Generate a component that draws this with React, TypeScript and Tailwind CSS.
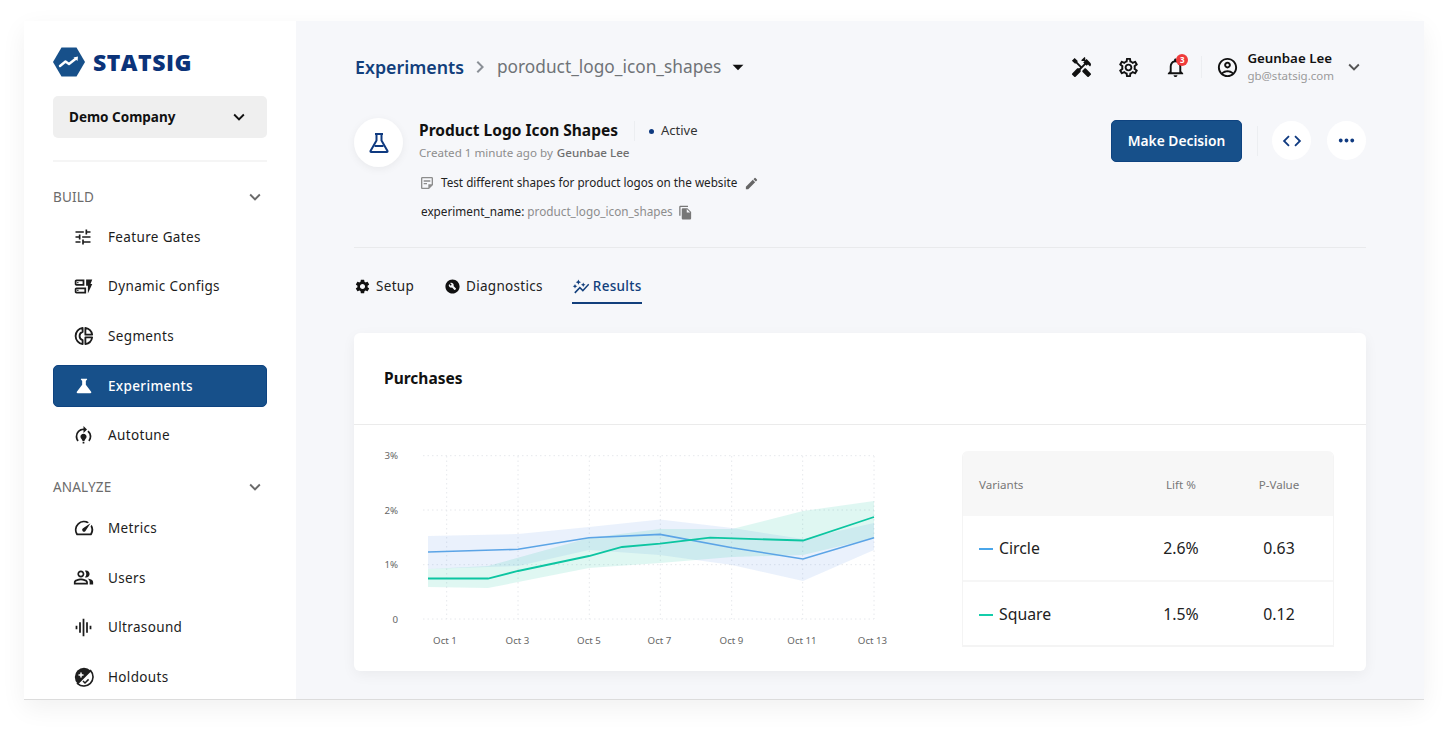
import type { ReactNode } from 'react';
import {
  MdAutoGraph,
  MdBuildCircle,
  MdCode,
  MdEdit,
  MdExpandMore,
  MdFileCopy,
  MdGraphicEq,
  MdHandyman,
  MdKeyboardArrowRight,
  MdMoreHoriz,
  MdNotificationsNone,
  MdOutlineAccountCircle,
  MdOutlineDynamicForm,
  MdOutlineModelTraining,
  MdOutlinePeopleAlt,
  MdOutlineSettings,
  MdOutlineSpeed,
  MdOutlineStickyNote2,
  MdScience,
  MdSettings,
  MdTune,
  MdArrowDropDown,
} from 'react-icons/md';

function HoldoutsIcon() {
  return (
    <svg width="22" height="22" viewBox="0 0 22 22">
      <circle cx="11" cy="11" r="9.2" fill="#1f1f1f" />
      <path d="M17.6 4.6 L4.6 17.6 A9.2 9.2 0 0 0 17.6 4.6Z" fill="#fff" stroke="#1f1f1f" strokeWidth="1.6" />
      <path d="M10 15l2 2 3.6-3.6" fill="none" stroke="#1f1f1f" strokeWidth="1.5" />
      <path d="M5.5 9h5M8 6.5v5" stroke="#fff" strokeWidth="1.5" />
    </svg>
  );
}

function SegmentsIcon() {
  return (
    <svg width="22" height="22" viewBox="0 0 24 24" fill="none" stroke="#1c1c1c" strokeWidth="2" strokeLinejoin="round">
      <path d="M10.5 3.1A9 9 0 0 0 10.5 20.9V16.5A4.7 4.7 0 0 1 10.5 7.5Z" />
      <path d="M13.5 3.1A9 9 0 0 1 20.9 10.5H13.5Z" />
      <path d="M13.5 13.5H20.9A9 9 0 0 1 13.5 20.9Z" />
    </svg>
  );
}

function Logo() {
  return (
    <div className="flex items-center gap-[8px] h-[30px]">
      <svg width="32" height="30" viewBox="0 0 32 30">
        <polygon points="0,15 8.5,0.5 23.5,0.5 32,15 23.5,29.5 8.5,29.5" fill="#17508a" />
        <path d="M7 19 L12.5 14.5 L16 17 L23 11.5" fill="none" stroke="#fff" strokeWidth="2.4" strokeLinecap="round" strokeLinejoin="round" />
        <path d="M20.5 10.5 L25 9.5 L24.5 14Z" fill="#fff" />
      </svg>
      <span className="font-['Open_Sans',sans-serif] font-extrabold text-[23px] leading-none text-[#0b3379] tracking-[0.5px]">STATSIG</span>
    </div>
  );
}

function NavItem({ icon, label, active }: { icon: ReactNode; label: string; active?: boolean }) {
  return (
    <div
      className={
        active
          ? 'flex items-center h-[42px] mb-[7.6px] rounded-[5px] bg-[#17508a] border border-[#0e4380] text-white font-medium'
          : 'flex items-center h-[42px] mb-[7.6px] border border-transparent text-[#1c1c1c]'
      }
    >
      <span className="w-[54px] pl-[19px] flex items-center shrink-0">{icon}</span>
      <span className="text-[13.5px] tracking-[0.35px]">{label}</span>
    </div>
  );
}

function SectionLabel({ label }: { label: string }) {
  return (
    <div className="flex items-center justify-between h-[20px] text-[#6b6b6b]">
      <span className="text-[13.5px] tracking-[0.2px]">{label}</span>
      <MdExpandMore size={22} className="mr-[1px]" />
    </div>
  );
}

function Sidebar() {
  return (
    <aside className="w-[272px] shrink-0 bg-white px-[29px] pt-[26px]">
      <Logo />
      <div className="mt-[19px] h-[42px] rounded-[5px] bg-[#efefef] flex items-center justify-between pl-[16px] pr-[17px]">
        <span className="text-[13.5px] font-bold text-[#111]">Demo Company</span>
        <MdExpandMore size={22} className="text-[#111]" />
      </div>
      <div className="mt-[22px] h-[2px] bg-[#f5f5f5]" />
      <div className="mt-[25px]">
        <SectionLabel label="BUILD" />
      </div>
      <div className="mt-[9px]">
        <NavItem icon={<MdTune size={20} />} label="Feature Gates" />
        <NavItem icon={<MdOutlineDynamicForm size={21} />} label="Dynamic Configs" />
        <NavItem icon={<SegmentsIcon />} label="Segments" />
        <NavItem active icon={<MdScience size={22} />} label="Experiments" />
        <NavItem icon={<MdOutlineModelTraining size={21} />} label="Autotune" />
      </div>
      <div className="mt-[21px]">
        <SectionLabel label="ANALYZE" />
      </div>
      <div className="mt-[10px]">
        <NavItem icon={<MdOutlineSpeed size={22} />} label="Metrics" />
        <NavItem icon={<MdOutlinePeopleAlt size={21} />} label="Users" />
        <NavItem icon={<MdGraphicEq size={21} />} label="Ultrasound" />
        <NavItem icon={<HoldoutsIcon />} label="Holdouts" />
      </div>
    </aside>
  );
}

function TopBar() {
  return (
    <div className="flex items-center justify-between h-[36px]">
      <div className="flex items-center ml-[1px]">
        <span className="text-[17.8px] font-semibold text-[#123f7c]">Experiments</span>
        <MdKeyboardArrowRight size={24} className="text-[#8a8f96] ml-[4px] mr-[5px]" />
        <span className="text-[17.3px] text-[#6f7377]">poroduct_logo_icon_shapes</span>
        <MdArrowDropDown size={26} className="text-[#111] ml-[4px]" />
      </div>
      <div className="flex items-center text-[#111] mr-[1px]">
        <MdHandyman size={23} />
        <MdOutlineSettings size={23} className="ml-[24px]" />
        <div className="relative ml-[24px]">
          <MdNotificationsNone size={23} />
          <span className="absolute -top-[2px] right-[-1px] w-[12px] h-[12px] rounded-full bg-[#ef3b3b] text-white text-[8px] font-bold leading-[12px] text-center">
            3
          </span>
        </div>
        <div className="w-px h-[22px] bg-[#eceef1] ml-[14px]" />
        <MdOutlineAccountCircle size={23} className="ml-[14px]" />
        <div className="ml-[8px] leading-none">
          <div className="text-[13.3px] font-semibold text-[#111] leading-[17px]">Geunbae Lee</div>
          <div className="text-[11.5px] text-[#9a9a9a] leading-[17px]">gb@statsig.com</div>
        </div>
        <MdExpandMore size={22} className="ml-[9px] text-[#555]" />
      </div>
    </div>
  );
}

function ExperimentHeader() {
  return (
    <div className="flex items-start justify-between mt-[33px] h-[130px] border-b border-[#e9eaec]">
      <div className="flex items-start">
        <div className="w-[49px] h-[49px] rounded-full bg-white shadow-[0_2px_8px_rgba(0,0,0,0.06)] flex items-center justify-center">
          <svg width="24" height="24" viewBox="0 0 24 24" fill="none" stroke="#0f3a80" strokeWidth="2">
            <path d="M8 3h8M9.5 3v6.5L3.5 20a.7.7 0 0 0 .6 1h15.8a.7.7 0 0 0 .6-1l-6-10.5V3" strokeLinejoin="round" />
            <path d="M7.5 15h9" />
          </svg>
        </div>
        <div className="ml-[16px] mt-[1px]">
          <div className="flex items-center h-[24px]">
            <span className="text-[15.5px] font-bold text-[#111]">Product Logo Icon Shapes</span>
            <span className="w-px h-[20px] bg-[#eceef1] ml-[16px]" />
            <span className="w-[5px] h-[5px] rounded-full bg-[#0f3a80] ml-[14px]" />
            <span className="text-[13px] text-[#333] ml-[7px]">Active</span>
          </div>
          <div className="text-[11.6px] text-[#8d8d8d] mt-[2px] leading-[16px]">
            Created 1 minute ago by <span className="ml-[1px] text-[#6f6f6f] font-medium">Geunbae Lee</span>
          </div>
          <div className="flex items-center mt-[13px] h-[18px]">
            <MdOutlineStickyNote2 size={16} className="text-[#8d8d8d]" />
            <span className="ml-[6px] text-[11.7px] text-[#222]">Test different shapes for product logos on the website</span>
            <MdEdit size={15} className="ml-[7px] text-[#666]" />
          </div>
          <div className="flex items-center mt-[11px] h-[18px] ml-[2px] text-[11.75px]">
            <span className="text-[#222]">experiment_name:</span>
            <span className="ml-[3px] text-[#8d8d8d]">product_logo_icon_shapes</span>
            <MdFileCopy size={15} className="ml-[5px] text-[#777]" />
          </div>
        </div>
      </div>
      <div className="flex items-center mt-[2px]">
        <button className="w-[131px] h-[42px] rounded-[5px] bg-[#17508a] border border-[#0e4380] text-white text-[13.8px] font-semibold">
          Make Decision
        </button>
        <span className="w-px h-[30px] bg-[#eceef1] ml-[15px]" />
        <span className="w-[39px] h-[39px] -mt-[1px] rounded-full bg-white ml-[14px] flex items-center justify-center text-[#0f3a80]">
          <MdCode size={22} />
        </span>
        <span className="w-[39px] h-[39px] -mt-[1px] rounded-full bg-white ml-[16px] flex items-center justify-center text-[#0f3a80]">
          <MdMoreHoriz size={23} />
        </span>
      </div>
    </div>
  );
}

function Tabs() {
  return (
    <div className="flex items-center h-[77px] text-[13.5px] text-[#222] tracking-[0.3px]">
      <div className="flex items-center gap-[5px]">
        <MdSettings size={17} className="text-[#111]" />
        <span>Setup</span>
      </div>
      <div className="flex items-center gap-[5px] ml-[30px]">
        <MdBuildCircle size={17} className="text-[#111]" />
        <span>Diagnostics</span>
      </div>
      <div className="relative flex items-center gap-[3px] ml-[29px] text-[#123f7c] font-medium">
        <MdAutoGraph size={18} />
        <span>Results</span>
        <span className="absolute left-0 right-0 top-[26px] h-[2px] bg-[#123f7c]" />
      </div>
    </div>
  );
}

const xs = [446.7, 518, 589.3, 660.3, 731.7, 802.7, 874];
const ys = [455.7, 510, 564.7, 619];
const blueBand =
  '428,536 518,534 589,527 660,519.5 732,528 803,539 874,523 874,550 803,581 732,565 660,555 589,550 518,566 428,569';
const greenBand =
  '428,569 488,566 589,538 660,529 732,529 803,511 874,501 874,538 803,555 732,557 660,563 589,568 488,588 428,587';
const blueLine = '428,552 518,549.3 589,537.7 660,534.4 732,547.7 803,559 874,537.7';
const greenLine = '428,578.5 488,578.5 518,571 589,556 622,547 660,543.6 710,537.7 803,540.5 874,517';
const xLabels = ['Oct 1', 'Oct 3', 'Oct 5', 'Oct 7', 'Oct 9', 'Oct 11', 'Oct 13'];
const labelX = [445, 517.5, 589, 659.5, 731.5, 802, 872.5];

function Chart() {
  // viewBox uses page coordinates so the points read straight off the screenshot
  return (
    <svg width="540" height="210" viewBox="370 445 540 210" className="shrink-0">
      {ys.map((y) => (
        <line key={y} x1="423" x2="874" y1={y} y2={y} stroke="#e6e8ec" strokeWidth="1" strokeDasharray="1.5 3" />
      ))}
      {xs.map((x) => (
        <line key={x} x1={x} x2={x} y1="456" y2="619" stroke="#e6e8ec" strokeWidth="1" strokeDasharray="1.5 3" />
      ))}
      <polygon points={blueBand} fill="#5f8fe8" fillOpacity="0.13" />
      <polygon points={greenBand} fill="#19c7a5" fillOpacity="0.14" />
      <polyline points={blueLine} fill="none" stroke="#5ba4e6" strokeWidth="1.6" />
      <polyline points={greenLine} fill="none" stroke="#0cc5a1" strokeWidth="1.8" />
      {['3%', '2%', '1%', '0'].map((t, i) => (
        <text key={t} x="398" y={ys[i] + 3.5} textAnchor="end" fontSize="9.7" fill="#666">
          {t}
        </text>
      ))}
      {xLabels.map((t, i) => (
        <text key={t} x={labelX[i]} y="643.5" textAnchor="middle" fontSize="9.7" fill="#666">
          {t}
        </text>
      ))}
    </svg>
  );
}

function VariantRow({ name, color, lift, p, last }: { name: string; color: string; lift: string; p: string; last?: boolean }) {
  return (
    <div className={last ? 'flex items-center h-[65px] pl-[16px]' : 'flex items-center h-[66px] pl-[16px] pt-[2px] border-b-2 border-[#f6f6f6]'}>
      <span className="w-[14px] h-[2px] mr-[6px]" style={{ backgroundColor: color }} />
      <span className="w-[146px] text-[15.8px] text-[#222]">{name}</span>
      <span className="w-[72px] text-center text-[15.8px] text-[#222]">{lift}</span>
      <span className="w-[100px] ml-[12px] text-center text-[15.8px] text-[#222]">{p}</span>
    </div>
  );
}

function VariantTable() {
  return (
    <div className="w-[372px] h-[196px] mt-[26px] ml-[52px] rounded-t-[6px] border-x border-b-2 border-[#f4f4f4] overflow-hidden">
      <div className="flex items-center h-[65px] pl-[16px] pt-[2px] bg-[#f7f7f7] text-[11.6px] text-[#777]">
        <span className="w-[166px]">Variants</span>
        <span className="w-[72px] text-center">Lift %</span>
        <span className="w-[100px] ml-[12px] text-center">P-Value</span>
      </div>
      <VariantRow name="Circle" color="#4aa6ea" lift="2.6%" p="0.63" />
      <VariantRow name="Square" color="#14cdaa" lift="1.5%" p="0.12" last />
    </div>
  );
}

function PurchasesCard() {
  return (
    <div className="h-[338px] rounded-[6px] bg-white shadow-[0_4px_14px_rgba(0,0,0,0.05)]">
      <div className="flex items-center h-[92px] px-[30px] border-b border-[#ebebeb] text-[15.5px] font-bold text-[#111]">Purchases</div>
      <div className="flex items-start">
        <div className="ml-[16px] mt-[20px]">
          <Chart />
        </div>
        <VariantTable />
      </div>
    </div>
  );
}

export default function App() {
  return (
    <div className="w-[1448px] h-[730px] bg-white overflow-hidden pt-[21px] px-[24px] font-['Noto_Sans',sans-serif]">
      <div className="flex h-[679px] overflow-hidden border-b border-[#dcdcdc] shadow-[0_8px_24px_rgba(0,0,0,0.06)]">
        <Sidebar />
        <main className="flex-1 bg-[#f6f7fa] px-[58px] pt-[28px]">
          <TopBar />
          <ExperimentHeader />
          <Tabs />
          <div className="mt-[8px]">
            <PurchasesCard />
          </div>
        </main>
      </div>
    </div>
  );
}
